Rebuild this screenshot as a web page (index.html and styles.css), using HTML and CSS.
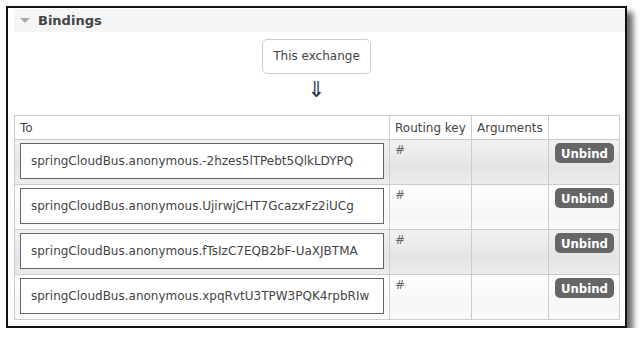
FILE: index.html
```html
<!DOCTYPE html>
<html lang="en">
<head>
  <meta charset="UTF-8" />
  <title>Bindings</title>
  <link rel="stylesheet" href="styles.css">
</head>
<body>
  <div class="frame">
    <div class="section-head">
      <span class="toggle"></span>
      <h2>Bindings</h2>
    </div>

    <div class="bindings-top">
      <span class="exchange-box">This exchange</span>
      <span class="arrow">&#8659;</span>
    </div>

    <table class="list">
      <colgroup>
        <col class="col-to">
        <col class="col-key">
        <col class="col-args">
        <col class="col-act">
      </colgroup>
      <thead>
        <tr>
          <th>To</th>
          <th>Routing key</th>
          <th>Arguments</th>
          <th></th>
        </tr>
      </thead>
      <tbody>
        <tr class="alt1">
          <td><span class="queue">springCloudBus.anonymous.-2hzes5lTPebt5QlkLDYPQ</span></td>
          <td>#</td>
          <td></td>
          <td class="c"><button class="unbind">Unbind</button></td>
        </tr>
        <tr class="alt2">
          <td><span class="queue">springCloudBus.anonymous.UjirwjCHT7GcazxFz2iUCg</span></td>
          <td>#</td>
          <td></td>
          <td class="c"><button class="unbind">Unbind</button></td>
        </tr>
        <tr class="alt1">
          <td><span class="queue">springCloudBus.anonymous.fTsIzC7EQB2bF-UaXJBTMA</span></td>
          <td>#</td>
          <td></td>
          <td class="c"><button class="unbind">Unbind</button></td>
        </tr>
        <tr class="alt2">
          <td><span class="queue">springCloudBus.anonymous.xpqRvtU3TPW3PQK4rpbRIw</span></td>
          <td>#</td>
          <td></td>
          <td class="c"><button class="unbind">Unbind</button></td>
        </tr>
      </tbody>
    </table>
  </div>
</body>
</html>
```

FILE: styles.css
```css
body {
  margin: 0;
  background-color: #fff;
  font-family: "DejaVu Sans", Verdana, sans-serif;
  font-size: 12px;
  color: #444;
}

.frame {
  margin: 6px 0 0 6px;
  width: 611px;
  height: 317px;
  border: 2px solid #111;
  padding: 1px 0 0 6px;
  box-shadow: 6px 6px 6px rgba(0, 0, 0, 0.6);
  overflow: hidden;
}

.section-head {
  display: flex;
  align-items: center;
  height: 23px;
  background-color: #f5f5f5;
}

.toggle {
  width: 0;
  height: 0;
  margin: 0 8px 0 6px;
  border-left: 5px solid transparent;
  border-right: 5px solid transparent;
  border-top: 5px solid #aaa;
}

h2 {
  margin: 0;
  font-size: 13px;
  font-weight: bold;
  color: #444;
}

.bindings-top {
  width: 605px;
  height: 83px;
  display: flex;
  flex-direction: column;
  align-items: center;
  padding-top: 7px;
  box-sizing: border-box;
}

.exchange-box {
  display: block;
  padding: 0 10px;
  height: 33px;
  line-height: 33px;
  border: 1px solid #ccc;
  border-radius: 5px;
  color: #444;
}

.arrow {
  display: block;
  line-height: 24px;
  font-size: 22px;
  color: #2a3550;
  margin-top: 4px;
}

table.list {
  width: 605px;
  table-layout: fixed;
  border-collapse: collapse;
}

.col-to { width: 375px; }
.col-key { width: 82px; }
.col-args { width: 77px; }
.col-act { width: 71px; }

th, td {
  border: 1px solid #ccc;
  text-align: left;
  font-weight: normal;
  color: #444;
  white-space: nowrap;
}

th {
  height: 23px;
  padding: 0 5px;
  vertical-align: middle;
  background-color: #fff;
}

td {
  height: 36px;
  padding: 3px 5px 5px;
  vertical-align: top;
  color: #666;
}

td.c { padding: 3px 5px 0; }

tr.alt1 td {
  background: linear-gradient(#f2f2f2, #e4e4e4 60%, #ececec);
}

tr.alt2 td {
  background: linear-gradient(#ffffff, #f6f6f6 70%, #fbfbfb);
}

.queue {
  display: block;
  height: 34px;
  line-height: 34px;
  padding: 0 10px;
  border: 1px solid #666;
  background-color: #fff;
  color: #444;
}

.unbind {
  margin-left: 1px;
  font-family: "DejaVu Sans Condensed", "DejaVu Sans", sans-serif;
  font-size: 13px;
  font-weight: bold;
  color: #fff;
  background-color: #666;
  border: none;
  border-radius: 5px;
  height: 20px;
  padding: 0 6px;
}
```
